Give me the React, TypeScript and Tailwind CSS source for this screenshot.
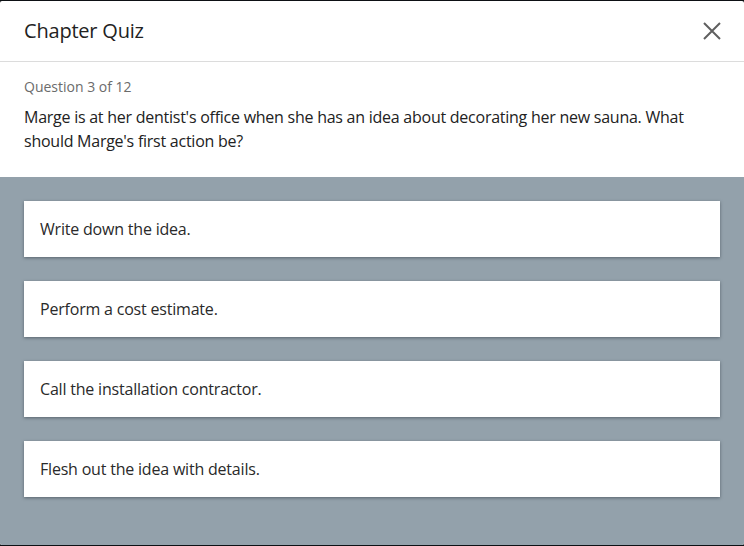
import React from "react";

const answers = [
  "Write down the idea.",
  "Perform a cost estimate.",
  "Call the installation contractor.",
  "Flesh out the idea with details.",
];

const CloseIcon = () => (
  <svg width="18" height="18" viewBox="0 0 18 18" fill="none">
    <path d="M1 1L17 17M17 1L1 17" stroke="#5f5f5f" strokeWidth="2" />
  </svg>
);

const AnswerCard = ({ text }: { text: string }) => (
  <li className="bg-white h-14 flex items-center px-4 text-[16px] text-[#2a2a2a] tracking-[-0.2px] shadow-[0_1px_3px_rgba(40,50,60,0.55)] cursor-pointer">
    {text}
  </li>
);

const App = () => {
  return (
    <div
      className="w-[744px] h-[546px] bg-[#0d1014] pt-px pb-px overflow-hidden"
      style={{ fontFamily: '"Open Sans", "Noto Sans", sans-serif' }}
    >
      <div className="h-full flex flex-col bg-white rounded-[2px] overflow-hidden">
        {/* Header */}
        <div className="h-[61px] shrink-0 flex items-center justify-between pl-6 pr-[23px] border-b border-[#dcdcdc]">
          <h1 className="text-[20px] text-[#222] tracking-[-0.2px]">Chapter Quiz</h1>
          <button className="p-0">
            <CloseIcon />
          </button>
        </div>

        {/* Question */}
        <div className="shrink-0 px-6 pt-[15px] pb-6">
          <div className="text-[14px] leading-5 text-[#6b6b6b]">Question 3 of 12</div>
          <p className="mt-2 text-[16px] leading-6 text-[#222] tracking-[-0.25px]">
            Marge is at her dentist's office when she has an idea about decorating her new sauna. What
            should Marge's first action be?
          </p>
        </div>

        {/* Answers */}
        <div className="flex-1 bg-[#93a1ab] px-6 pt-6">
          <ul className="flex flex-col gap-6">
            {answers.map((a) => (
              <AnswerCard key={a} text={a} />
            ))}
          </ul>
        </div>
      </div>
    </div>
  );
};

export default App;
